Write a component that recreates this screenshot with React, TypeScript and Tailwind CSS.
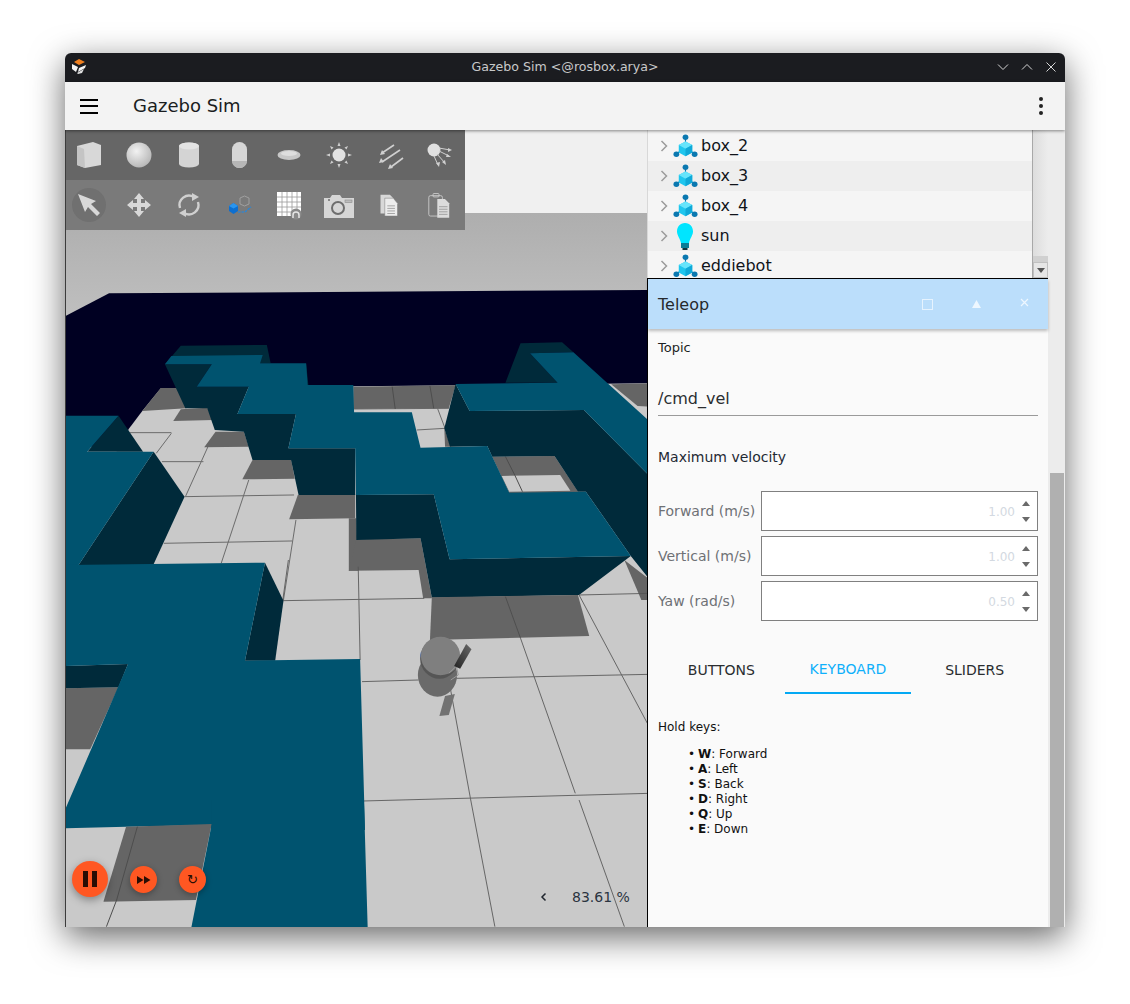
import type { ReactNode } from "react";

const TOP = "#00536f";
const SIDE = "#002a3a";
const SHADE = "#656565";
const LINE = "#555555";

const ENTITIES = [
  { name: "box_2", bulb: false },
  { name: "box_3", bulb: false },
  { name: "box_4", bulb: false },
  { name: "sun", bulb: true },
  { name: "eddiebot", bulb: false },
];

const LIMITS = [
  { label: "Forward (m/s)", value: "1.00" },
  { label: "Vertical (m/s)", value: "1.00" },
  { label: "Yaw (rad/s)", value: "0.50" },
];

const KEYS = [
  { key: "W", action: "Forward" },
  { key: "A", action: "Left" },
  { key: "S", action: "Back" },
  { key: "D", action: "Right" },
  { key: "Q", action: "Up" },
  { key: "E", action: "Down" },
];

function Tool({ children }: { children: ReactNode }) {
  return (
    <div className="w-[50px] h-[50px] pr-[2px] flex items-center justify-center">
      <svg width="32" height="32" viewBox="0 0 32 32">
        {children}
      </svg>
    </div>
  );
}

function ShapeTools() {
  return (
    <div className="flex h-[50px] bg-[#666666]">
      <Tool>
        <polygon points="4,7 20,3 28,6 28,26 12,29 4,26" fill="#d8d8d8" />
        <polygon points="4,7 11,10 12,29 4,26" fill="#c4c4c4" />
      </Tool>
      <Tool>
        <defs>
          <radialGradient id="ball" cx="0.4" cy="0.35" r="0.75">
            <stop offset="0" stopColor="#f2f2f2" />
            <stop offset="1" stopColor="#b0b0b0" />
          </radialGradient>
        </defs>
        <circle cx="16" cy="16" r="12.5" fill="url(#ball)" />
      </Tool>
      <Tool>
        <path d="M6 7a10 3.5 0 0 1 20 0v18a10 3.5 0 0 1-20 0z" fill="#d4d4d4" />
        <ellipse cx="16" cy="7" rx="10" ry="3.5" fill="#e4e4e4" />
      </Tool>
      <Tool>
        <rect x="9" y="3" width="15" height="26" rx="7.5" fill="#d6d6d6" />
        <path d="M9 22h15v0a7.5 7 0 0 1-15 0z" fill="#b6b6b6" />
      </Tool>
      <Tool>
        <ellipse cx="16" cy="16" rx="11.5" ry="5" fill="#c8c8c8" />
        <ellipse cx="16" cy="14.5" rx="8" ry="2.5" fill="#dedede" />
      </Tool>
      <Tool>
        <circle cx="16" cy="16" r="6.5" fill="#e2e2e2" />
        <g fill="#d0d0d0">
          <polygon points="16,3 14.5,7 17.5,7" />
          <polygon points="16,29 14.5,25 17.5,25" />
          <polygon points="3,16 7,14.5 7,17.5" />
          <polygon points="29,16 25,14.5 25,17.5" />
          <polygon points="7,7 10.5,8.5 8.5,10.5" />
          <polygon points="25,7 21.5,8.5 23.5,10.5" />
          <polygon points="7,25 10.5,23.5 8.5,21.5" />
          <polygon points="25,25 21.5,23.5 23.5,21.5" />
        </g>
      </Tool>
      <Tool>
        <g stroke="#d0d0d0" strokeWidth="1.6" fill="#d0d0d0">
          <path d="M21 6 9 14" />
          <path d="M27 11 9 23" />
          <path d="M30 19 18 28" />
        </g>
        <g fill="#d0d0d0">
          <polygon points="7,16 9,11 12,15" />
          <polygon points="6,24 8,19 11,23" />
          <polygon points="15,30 17,25 20,29" />
        </g>
      </Tool>
      <Tool>
        <circle cx="11" cy="11" r="6.5" fill="#e0e0e0" />
        <g stroke="#d0d0d0" strokeWidth="1" fill="none">
          <path d="M16 9 27 11" />
          <path d="M16 12 26 17" />
          <path d="M14 15 22 24" />
          <path d="M11 17 15 26" />
        </g>
        <g fill="#d0d0d0">
          <polygon points="29,11 25,9 25,13" />
          <polygon points="28,18 24,15 23,18" />
          <polygon points="23,26 22,21 19,23" />
          <polygon points="16,28 17,23 13,24" />
        </g>
      </Tool>
    </div>
  );
}

function ActionTools() {
  return (
    <div className="flex h-[50px] bg-[#7a7a7a]">
      <div className="w-[50px] h-[50px] pr-[2px] flex items-center justify-center">
        <div className="w-[34px] h-[34px] rounded-full bg-[#707070] flex items-center justify-center">
          <svg width="26" height="26" viewBox="0 0 26 26">
            <polygon points="2,2 20,9 15,12 24,21 21,24 12,15 9,20" fill="#d8d8d8" />
          </svg>
        </div>
      </div>
      <Tool>
        <polygon points="16,4 21,10 18,10 18,14 22,14 22,11 28,16 22,21 22,18 18,18 18,22 21,22 16,28 11,22 14,22 14,18 10,18 10,21 4,16 10,11 10,14 14,14 14,10 11,10" fill="#d8d8d8" />
      </Tool>
      <Tool>
        <g stroke="#d0d0d0" strokeWidth="2.4" fill="none">
          <path d="M7 19a9.5 9.5 0 0 1 14-11" />
          <path d="M25 13a9.5 9.5 0 0 1-14 11" />
        </g>
        <g fill="#d0d0d0">
          <polygon points="19,4 26,8 19,12" />
          <polygon points="13,20 6,24 13,28" />
        </g>
      </Tool>
      <Tool>
        <polygon points="17,9 21.500,7 26,9 26,15 21.500,17 17,15" fill="none" stroke="#a8a8a8" strokeWidth="0.8" />
        <path d="M15 23h7l6-5" fill="none" stroke="#1e88e5" strokeWidth="1.200" strokeDasharray="2.500 1" />
        <polygon points="6,17 10.500,14 15,17 15,22 10.500,25 6,22" fill="#0d6fd0" />
        <polygon points="6,17 10.500,14 15,17 10.500,19.500" fill="#2a95ee" />
      </Tool>
      <Tool>
        <rect x="4" y="3" width="24" height="24" fill="#ffffff" />
        <path d="M4 8h24M4 13h24M4 18h24M4 23h24M9 3v24M14 3v24M19 3v24M24 3v24" stroke="#9a9a9a" strokeWidth="0.8" />
        <circle cx="23" cy="25" r="5.500" fill="#8a8a8a" />
        <path d="M20 29v-3a3 3 0 0 1 6 0v3" stroke="#e6e6e6" strokeWidth="1.500" fill="none" />
      </Tool>
      <Tool>
        <path d="M1 9h6l2-3h8l2 3h12v20H1z" fill="#d6d6d6" />
        <circle cx="15" cy="19" r="6" fill="#d6d6d6" stroke="#6e6e6e" strokeWidth="2" />
        <rect x="22" y="11" width="7" height="2.500" fill="#bcbcbc" stroke="#8a8a8a" strokeWidth="0.6" />
        <circle cx="6" cy="11" r="1" fill="#6e6e6e" />
      </Tool>
      <Tool>
        <g transform="translate(16 16) scale(0.85) translate(-16 -16)">
          <path d="M6 4h11l5 5v17H6z" fill="#d8d8d8" />
          <path d="M11 8h10l5 6v15H11z" fill="#ececec" stroke="#7a7a7a" strokeWidth="0.6" />
          <path d="M14 17h9M14 20h9M14 23h9M14 26h9" stroke="#8f8f8f" strokeWidth="0.9" />
        </g>
      </Tool>
      <Tool>
        <g transform="translate(16 16) scale(0.85) translate(-16 -16)">
          <rect x="4" y="5" width="16" height="24" rx="2" fill="none" stroke="#cfcfcf" strokeWidth="1" />
          <rect x="9" y="2.500" width="7" height="4" rx="1" fill="none" stroke="#cfcfcf" strokeWidth="1" />
          <path d="M14 9h9l5 5v17H14z" fill="#dcdcdc" />
          <path d="M16 18h10M16 21h10M16 24h10M16 27h10" stroke="#8f8f8f" strokeWidth="0.9" />
        </g>
      </Tool>
    </div>
  );
}

function WorldScene() {
  return (
    <svg className="block w-[581px] h-[797px]" viewBox="66 130 581 797">
      <defs>
        <linearGradient id="ground" x1="0" y1="0" x2="0" y2="1">
          <stop offset="0" stopColor="#aeaeae" />
          <stop offset="1" stopColor="#c0c0c0" />
        </linearGradient>
        <linearGradient id="arm" x1="0" y1="1" x2="1" y2="0">
          <stop offset="0" stopColor="#222222" />
          <stop offset="1" stopColor="#6a6a6a" />
        </linearGradient>
      </defs>
      <rect x="66" y="130" width="581" height="84" fill="#f0f0f0" />
      <rect x="66" y="213" width="581" height="110" fill="url(#ground)" />

      {/* far half of the maze */}
      <g transform="translate(60 280) scale(0.3775 0.3333)">
        <polygon points="15,108 130,40 1563,30 1563,500 15,500" fill="#000022" />
        <polygon points="267,325 1563,310 1563,1950 15,1950 15,800 182,447 218,393" fill="#c9c9c9" />

        <g stroke={LINE} fill="none" opacity="0.8">
          <path d="M185 458H295M270 545H380M330 650 620 645M275 790 615 783M778 387 1030 385M945 450 1020 445" vectorEffect="non-scaling-stroke" />
          <path d="M295 460 255 520M392 500 333 648M500 600 427 850M625 720 592 960M1000 385 1020 445" vectorEffect="non-scaling-stroke" />
        </g>

        <g fill={SHADE}>
          <polygon points="218,393 267,324 335,324 335,385" />
          <polygon points="300,423 320,388 390,383 405,420" />
          <polygon points="777,320 1048,316 1030,385 777,387" />
          <polygon points="1460,313 1563,310 1563,380 1530,378" />
          <polygon points="382,502 412,455 487,455 500,500" />
          <polygon points="483,598 510,540 612,538 622,596" />
          <polygon points="607,718 630,645 782,643 782,715" />
          <polygon points="765,715 785,715 790,872 765,872" />
          <polygon points="765,872 785,778 955,775 985,955 962,955 950,870" />
          <polygon points="1145,530 1310,528 1375,640 1190,640" />
          <polygon points="1018,445 1035,500 1020,500" />
          <polygon points="1495,840 1563,900 1563,960 1540,960" />
        </g>
        <polygon points="1170,588 1325,585 1352,632 1190,635" fill="#c9c9c9" />
        <path d="M1205 586 1225 635M880 320 888 387M980 318 990 385M1180 530 1205 586" stroke="#4d4d4d" fill="none" vectorEffect="non-scaling-stroke" />

        {/* right block */}
        <polygon points="1180,308 1220,190 1330,187 1360,217 1245,220 1318,308" fill={SIDE} />
        <polygon points="1048,312 1018,445 1033,500 1132,498 1145,530 1310,528 1372,635 1393,635 1512,828 1563,900 1563,590 1388,390 1085,393" fill={SIDE} />
        <polygon points="1245,220 1360,217 1563,425 1563,590 1388,390 1085,393 1048,312 1318,308" fill={TOP} />

        {/* stepped block */}
        <polygon points="320,197 548,195 558,250 278,253" fill={SIDE} />
        <polygon points="652,250 658,315 640,315" fill={SIDE} />
        <polygon points="278,253 402,253 362,320 500,320 470,402 625,402 605,505 782,505 782,645 632,645 612,540 510,540 487,455 410,450 390,385 332,385" fill={SIDE} />
        <polygon points="784,645 990,643 1032,838 1512,828 1375,945 985,953 955,775 785,780" fill={SIDE} />
        <polygon points="278,253 295,228 537,225 530,250 652,250 656,315 777,315 779,397 932,397 955,503 1132,498 1190,638 1393,635 1512,828 1032,838 990,643 784,645 782,505 605,505 625,402 470,402 500,320 362,320 402,253" fill={TOP} />

        {/* left blocks */}
        <polygon points="155,407 220,515 72,515" fill={SIDE} />
        <polygon points="248,515 330,650 247,855 48,857" fill={SIDE} />
        <polygon points="15,407 155,407 72,515 248,515 48,857 15,857" fill={TOP} />
      </g>

      {/* near half */}
      <g transform="translate(60 560) scale(0.3775 0.3333)">
        <g stroke={LINE} fill="none" opacity="0.85">
          <path d="M590 122 965 115M800 365 950 360M1050 355 1563 343M805 723 1563 700M1375 105 1563 100" vectorEffect="non-scaling-stroke" />
          <path d="M790 20 795 300M605 0 590 122M1220 235 1365 700M1030 360 1088 720M1375 105 1563 505" vectorEffect="non-scaling-stroke" />
        </g>
        <polygon points="985,112 1372,105 1402,228 980,240" fill={SHADE} />
        <path d="M1180 110 1220 235" stroke="#4f4f4f" fill="none" vectorEffect="non-scaling-stroke" />
        <polygon points="15,385 155,382 80,568 15,568" fill={SHADE} />
        <polygon points="15,318 180,312 155,382 15,385" fill={SIDE} />
        <polygon points="543,8 592,122 570,302 490,302" fill={SIDE} />
        <polygon points="15,15 543,8 490,302 795,297 808,810 400,810 400,795 175,800 15,805 15,745 180,312 15,318" fill={TOP} />

        {/* robot */}
        <ellipse cx="1000" cy="345" rx="52" ry="65" fill="#6a6a6a" />
        <polygon points="1020,408 1046,402 1030,465 1005,468" fill="#727272" />
        <ellipse cx="1005" cy="296" rx="51" ry="60" fill="#555555" />
        <ellipse cx="957" cy="285" rx="2" ry="10" fill="#4468b0" />
        <ellipse cx="1008" cy="288" rx="52" ry="58" fill="#7f7f7f" />
        <path d="M1030 340 1050 318 1055 345 1035 360" fill="none" stroke="#9a9a9a" vectorEffect="non-scaling-stroke" />
        <polygon points="1044,318 1076,252 1090,268 1060,326" fill="url(#arm)" />
      </g>

      <g transform="translate(60 800) scale(0.3775 0.3333)">
        <polygon points="175,80 402,72 360,300 115,305" fill={SHADE} />
        <path d="M205 80 150 300 123 380" stroke="#4d4d4d" fill="none" vectorEffect="non-scaling-stroke" />
        <polygon points="402,72 348,382 815,382 805,0 402,0" fill={TOP} />
        <path d="M1088 0 1152 380M1375 0 1495 380" stroke={LINE} fill="none" opacity="0.85" vectorEffect="non-scaling-stroke" />
      </g>
    </svg>
  );
}

function Viewport() {
  return (
    <div className="relative w-[582px] shrink-0 border-l border-[#3c3c3c] overflow-hidden">
      <WorldScene />
      <div className="absolute -left-px top-0 w-[400px]">
        <ShapeTools />
        <ActionTools />
      </div>

      {/* playback */}
      <button className="absolute left-[6px] top-[731px] w-9 h-9 rounded-full bg-[#ff5722] shadow-[0_3px_8px_rgba(0,0,0,0.35)] flex items-center justify-center gap-[4px]">
        <span className="w-[5px] h-[16px] bg-[#2a0d04]" />
        <span className="w-[5px] h-[16px] bg-[#2a0d04]" />
      </button>
      <button className="absolute left-[64px] top-[736px] w-[27px] h-[27px] rounded-full bg-[#ff5722] shadow-[0_2px_6px_rgba(0,0,0,0.3)] flex items-center justify-center">
        <svg width="14" height="10" viewBox="0 0 14 10">
          <polygon points="0,1 6.500,5 0,9" fill="#2a0d04" />
          <polygon points="7,1 13.500,5 7,9" fill="#2a0d04" />
        </svg>
      </button>
      <button className="absolute left-[113px] top-[736px] w-[27px] h-[27px] rounded-full bg-[#ff5722] shadow-[0_2px_6px_rgba(0,0,0,0.3)] flex items-center justify-center text-[13px] leading-none text-[#2a0d04]">
        ↻
      </button>

      {/* rtf */}
      <div className="absolute left-[474px] top-[758px] flex items-center h-[18px] text-[14px] text-[#2b3440]">
        <svg width="8" height="10" viewBox="0 0 8 10">
          <path d="M5.500 1.500 2 5l3.500 3.500" fill="none" stroke="#20262e" strokeWidth="1.500" />
        </svg>
        <span className="ml-[24px]">83.61 %</span>
      </div>
    </div>
  );
}

function EntityIcon() {
  return (
    <svg width="25" height="24" viewBox="0 0 26 26" preserveAspectRatio="none">
      <path d="M13 3v8M3 22l8-6M23 22l-8-6" stroke="#0a78b0" strokeWidth="1.200" />
      <circle cx="13" cy="3.500" r="3" fill="#0a78b0" />
      <circle cx="3.500" cy="22" r="3" fill="#0a78b0" />
      <circle cx="22.500" cy="22" r="3" fill="#0a78b0" />
      <polygon points="13,8 20,12 20,20 13,24 6,20 6,12" fill="#1fc6ee" />
      <polygon points="13,8 20,12 13,16 6,12" fill="#66e4fb" />
      <polygon points="13,16 20,12 20,20 13,24" fill="#0fa9d8" />
    </svg>
  );
}

function BulbIcon() {
  return (
    <svg width="20" height="28" viewBox="0 0 20 28">
      <path d="M10 1c5 0 8 4 8 8.500 0 4-3 6.500-4 11.500H6C5 16 2 13.500 2 9.500 2 5 5 1 10 1z" fill="#00e5ff" />
      <rect x="6" y="21" width="8" height="5" fill="#0a7d96" />
      <rect x="7.500" y="26" width="5" height="2" fill="#14363f" />
    </svg>
  );
}

function EntityTree() {
  return (
    <div className="h-[148px] shrink-0 flex overflow-hidden border-l border-[#d8d8d8]">
      <div className="flex-1 pt-px bg-[#f5f5f5] overflow-hidden">
        {ENTITIES.map((e, i) => (
          <div
            key={e.name}
            className={`h-[30px] shrink-0 flex items-center ${i % 2 === 1 ? "bg-[#eeeeee]" : "bg-[#f5f5f5]"}`}
          >
            <svg className="ml-[12px]" width="8" height="12" viewBox="0 0 8 12">
              <path d="M1.500 1 6.500 6l-5 5" fill="none" stroke="#9c9c9c" strokeWidth="1.500" />
            </svg>
            <div className="w-[26px] ml-[4px] flex justify-center">{e.bulb ? <BulbIcon /> : <EntityIcon />}</div>
            <span className="ml-[3px] text-[16px] text-[#10141a]">{e.name}</span>
          </div>
        ))}
      </div>
      <div className="w-[16px] flex flex-col bg-gradient-to-r from-[#dddddd] to-[#ececec] border-l border-[#a8a8a8]">
        <div className="flex-1" />
        <div className="h-[6px] bg-[#d0d0d0]" />
        <div className="h-[16px] bg-[#e6e6e6] border border-[#c0c0c0] flex items-center justify-center">
          <svg width="8" height="5" viewBox="0 0 8 5">
            <polygon points="0,0 8,0 4,5" fill="#555555" />
          </svg>
        </div>
      </div>
    </div>
  );
}

function TeleopHeader() {
  return (
    <div className="relative z-[1] h-[50px] shrink-0 flex items-center bg-[#bbdefb] shadow-[0_2px_3px_rgba(0,0,0,0.25)] pl-[10px] text-[16px] text-[#26292c]">
      <span className="flex-1 pt-px">Teleop</span>
      <div className="w-[11px] h-[11px] border border-[#e6f3fe]" />
      <svg className="ml-[39px]" width="9" height="8" viewBox="0 0 9 8">
        <polygon points="4.500,0 9,8 0,8" fill="#eef7ff" />
      </svg>
      <svg className="ml-[39px] mr-[19px] -mt-[3px]" width="9" height="9" viewBox="0 0 9 9">
        <path d="M1 1l7 7M8 1 1 8" stroke="#eef7ff" strokeWidth="1.200" />
      </svg>
    </div>
  );
}

function LimitField({ label, value }: { label: string; value: string }) {
  return (
    <div className="flex items-center h-[40px]">
      <span className="w-[103px] text-[14px] text-[#6e7175]">{label}</span>
      <div className="flex-1 h-full bg-white border border-[#808080] flex items-center justify-end pr-[7px]">
        <span className="pt-px text-[12px] text-[#d3d9e1]">{value}</span>
        <div className="ml-[7px] flex flex-col gap-[11px]">
          <svg className="block" width="8" height="5" viewBox="0 0 8 5">
            <polygon points="4,0 8,5 0,5" fill="#6a6a6a" />
          </svg>
          <svg className="block" width="8" height="5" viewBox="0 0 8 5">
            <polygon points="0,0 8,0 4,5" fill="#6a6a6a" />
          </svg>
        </div>
      </div>
    </div>
  );
}

function TeleopBody() {
  return (
    <div className="flex-1 px-[10px] bg-[#fafafa]">
      <div className="pt-[10px] text-[13px] leading-[18px] text-[#1c1f22]">Topic</div>
      <div className="mt-[21px] h-[38px] pt-[5px] flex items-center border-b border-[#9a9a9a] text-[16px] text-[#2b2e31]">/cmd_vel</div>
      <div className="mt-[31px] h-[20px] leading-[20px] text-[14px] text-[#1f2933]">Maximum velocity</div>
      <div className="mt-[24px] flex flex-col gap-[5px]">
        {LIMITS.map((l) => (
          <LimitField key={l.label} label={l.label} value={l.value} />
        ))}
      </div>
      <div className="mt-[25px] grid grid-cols-3 h-[48px] text-[14px] text-[#2a2d30]">
        <div className="flex items-center justify-center">BUTTONS</div>
        <div className="flex items-center justify-center text-[#0fb0fb] border-b-2 border-[#03a9f4]">KEYBOARD</div>
        <div className="flex items-center justify-center">SLIDERS</div>
      </div>
      <div className="mt-[25px] h-[16px] leading-[16px] text-[12px] text-[#111111]">Hold keys:</div>
      <ul className="mt-[12px] pl-[30px] text-[12px] leading-[15px] text-[#111111]">
        {KEYS.map((k) => (
          <li key={k.key} className="flex">
            <span className="w-[10px]">•</span>
            <span>
              <b>{k.key}</b>: {k.action}
            </span>
          </li>
        ))}
      </ul>
    </div>
  );
}

export default function App() {
  return (
    <div className="w-[1130px] h-[1004px] bg-white overflow-hidden pl-[65px] pt-[53px] font-['DejaVu_Sans',sans-serif]">
      <div className="w-[1000px] h-[874px] flex flex-col rounded-t-[6px] overflow-hidden shadow-[0_10px_34px_rgba(0,0,0,0.6)]">
        {/* Title bar */}
        <div className="relative h-[29px] shrink-0 bg-[#1b1c20] flex items-center justify-center text-[12.6px] text-[#c8c9ca]">
          <svg className="absolute left-[6px] top-[5px]" width="16" height="17" viewBox="0 0 16 17">
            <polygon points="8,1 14,4 8,7 3,4" fill="#f08020" />
            <polygon points="1,6 7,9 5,14 1,11" fill="#f4f4f4" />
            <polygon points="8,10 15,7 14,10 7,14" fill="#f4f4f4" />
            <polygon points="6,15 13,11 11,15 7,16" fill="#e0e0e0" />
          </svg>
          Gazebo Sim &lt;@rosbox.arya&gt;
          <div className="absolute right-[8px] top-[8px] flex gap-[12px]">
            <svg width="12" height="12" viewBox="0 0 12 12">
              <path d="M1 3.500 6 8.500l5-5" fill="none" stroke="#d6d6d6" strokeWidth="1" />
            </svg>
            <svg width="12" height="12" viewBox="0 0 12 12">
              <path d="M1 8.500 6 3.500l5 5" fill="none" stroke="#d6d6d6" strokeWidth="1" />
            </svg>
            <svg width="12" height="12" viewBox="0 0 12 12">
              <path d="M1.500 1.500l9 9M10.500 1.500l-9 9" fill="none" stroke="#d6d6d6" strokeWidth="1" />
            </svg>
          </div>
        </div>

        {/* App bar */}
        <div className="relative z-10 h-[48px] shrink-0 bg-[#f3f3f3] shadow-[0_1px_3px_rgba(0,0,0,0.45)] flex items-center pl-[15px] pr-[22px]">
          <div className="flex flex-col gap-[4.500px]">
            <span className="block w-[18px] h-[2px] bg-black" />
            <span className="block w-[18px] h-[2px] bg-black" />
            <span className="block w-[18px] h-[2px] bg-black" />
          </div>
          <span className="ml-[35px] -mt-[2px] text-[18px] text-[#1a1d21]">Gazebo Sim</span>
          <div className="ml-auto flex flex-col gap-[3px]">
            <span className="block w-[4px] h-[4px] rounded-full bg-[#222222]" />
            <span className="block w-[4px] h-[4px] rounded-full bg-[#222222]" />
            <span className="block w-[4px] h-[4px] rounded-full bg-[#222222]" />
          </div>
        </div>

        {/* Body */}
        <div className="flex-1 flex min-h-0">
          <Viewport />
          <div className="w-[401px] shrink-0 flex flex-col">
            <EntityTree />
            <div className="h-px bg-black" />
            <div className="flex-1 flex flex-col border-l border-black min-h-0">
              <TeleopHeader />
              <TeleopBody />
            </div>
          </div>
          <div className="flex-1 flex flex-col bg-[#ececec] pl-[2px] pr-px">
            <div className="h-[343px] shrink-0" />
            <div className="flex-1 bg-[#b0b0b0]" />
          </div>
        </div>
      </div>
    </div>
  );
}
